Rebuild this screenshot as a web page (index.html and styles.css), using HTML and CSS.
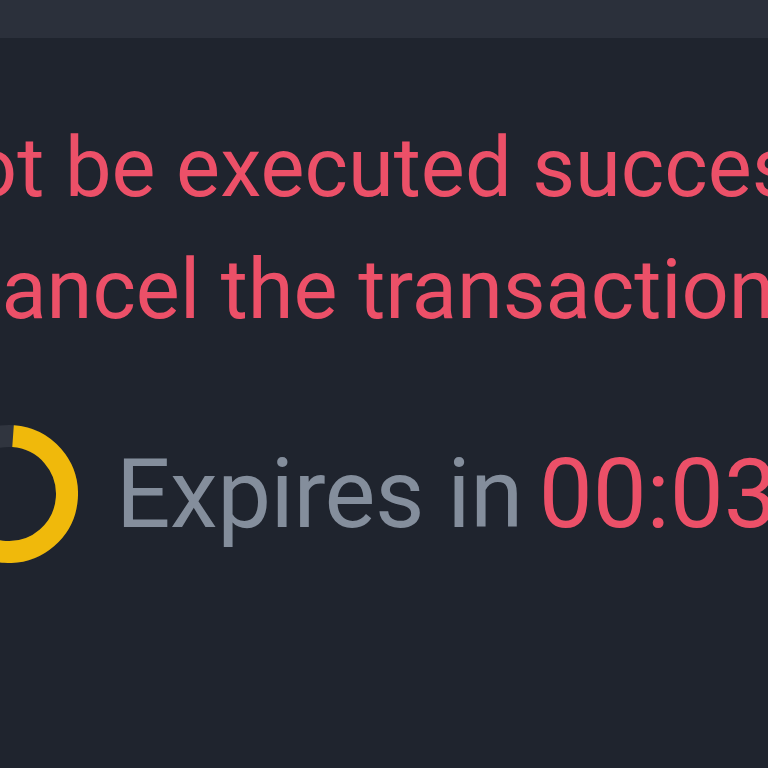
FILE: index.html
```html
<!DOCTYPE html>
<html>
<head>
<meta charset="utf-8">
<link rel="stylesheet" href="styles.css">
</head>
<body>
<div class="topbar"></div>
<main class="content">
  <p class="warn line1">not be executed successfully</p>
  <p class="warn line2">cancel the transaction.</p>
  <div class="expires">
    <svg class="ring" width="138" height="138" viewBox="0 0 138 138">
      <circle cx="69" cy="69" r="58" fill="none" stroke="#30353f" stroke-width="22"/>
      <circle cx="69" cy="69" r="58" fill="none" stroke="#f0b90b" stroke-width="22" stroke-dasharray="310 400" transform="rotate(-86 69 69)"/>
    </svg>
    <span class="label">Expires in</span>
    <span class="time">00:03</span>
  </div>
</main>
</body>
</html>
```
FILE: styles.css
```css
html, body {
  margin: 0;
  padding: 0;
  background: #1f242e;
  width: 768px;
  height: 768px;
  overflow: hidden;
}
.topbar {
  height: 38px;
  background: #2b303b;
}
.content {
  padding-top: 69px;
  font-family: Roboto, "Liberation Sans", sans-serif;
  overflow: hidden;
}
.warn {
  margin: 0;
  white-space: nowrap;
  color: #ec5068;
  font-size: 83px;
  line-height: 122px;
}
.line1 {
  margin-left: -76px;
}
.line2 {
  margin-left: -42px;
}
.expires {
  margin-top: 74px;
  margin-left: -60px;
  display: flex;
  align-items: center;
  white-space: nowrap;
  font-size: 96px;
  line-height: 1;
}
.ring {
  flex: none;
  margin-right: 38px;
}
.label {
  color: #848e9c;
  margin-right: 16px;
  letter-spacing: -0.5px;
}
.time {
  color: #ec5068;
}
```
